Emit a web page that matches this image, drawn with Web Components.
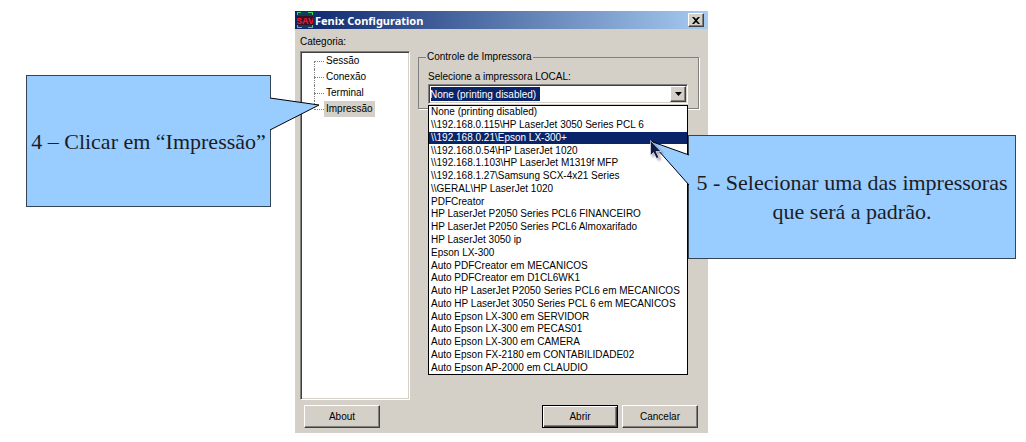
<!DOCTYPE html>
<html lang="pt-BR">
<head>
<meta charset="utf-8">
<title>Fenix Configuration</title>
<style>
body { margin: 0; background: #fff; }
</style>
</head>
<body>
<guide-slide></guide-slide>
<script>
const define = (name, html, setup) => customElements.define(name, class extends HTMLElement {
  constructor() {
    super();
    this.attachShadow({ mode: 'open' }).innerHTML = html;
    if (setup) setup(this, this.shadowRoot);
  }
});

define('title-bar', `
<style>
:host { display: flex; align-items: center; gap: 2px; height: 18px; padding: 0 4px 0 2px;
  background: linear-gradient(90deg, #0a246a, #a6caf0); color: #fff; font: bold 11px "Noto Sans", sans-serif; }
h1 { flex: 1; margin: 0; font: inherit; white-space: nowrap; }
svg { display: block; }
button { display: grid; place-items: center; width: 16px; height: 14px; padding: 0; background: #d4d0c8;
  border: 1px solid; border-color: #fff #404040 #404040 #fff; box-shadow: inset -1px -1px #808080; }
</style>
<svg width="16" height="16" viewBox="0 0 16 16" aria-hidden="true">
  <path fill="#123c5c" d="M0 0h16v16H0z"/>
  <path fill="#38102c" d="M0 4h16v9H0z"/>
  <path stroke="#38d860" d="M0 .5h4M11 .5h5M0 15.5h5M11 15.5h5M.5 0v3M15.5 0v3M.5 13v3M15.5 13v3"/>
  <text x="8" y="12" text-anchor="middle" font-family="Liberation Sans, sans-serif" font-size="9" font-weight="bold" fill="#ff1820">SAV</text>
</svg>
<h1><slot></slot></h1>
<button aria-label="Fechar"><svg width="8" height="7" viewBox="0 0 8 7"><path d="M0 0h2l2 2 2-2h2L5 3.500 8 7H6L4 5 2 7H0l3-3.500z"/></svg></button>
`);

define('push-button', `
<style>
:host { display: block; }
button { display: block; width: 100%; height: 23px; padding: 0; background: #d4d0c8; color: #000; font: inherit;
  border: 1px solid; border-color: #fff #404040 #404040 #fff; box-shadow: inset -1px -1px #808080; }
:host([default]) button { border-color: #000; box-shadow: inset 1px 1px #fff, inset -1px -1px #404040, inset -2px -2px #808080; }
</style>
<button><slot></slot></button>
`);

define('tree-item', `
<style>
:host { display: flex; align-items: center; height: 16px; padding-left: 12px; line-height: 16px; }
i { position: relative; align-self: stretch; width: 10px; }
i::before { content: ""; position: absolute; left: 0; top: 0; bottom: 0; border-left: 1px dotted #808080; }
i::after { content: ""; position: absolute; left: 0; right: 0; top: 8px; border-top: 1px dotted #808080; }
:host(:first-child) i::before { top: 8px; }
:host(:last-child) i::before { bottom: 7px; }
span { padding: 0 2px; }
:host([aria-selected="true"]) span { background: #d4d0c8; }
</style>
<i></i><span><slot></slot></span>
`);

define('category-tree', `
<style>
:host { display: block; box-sizing: border-box; background: #fff; border: 1px solid;
  border-color: #808080 #fff #fff #808080; box-shadow: inset 1px 1px #404040, inset -1px -1px #d4d0c8; padding: 1px; }
</style>
<slot></slot>
`);

define('printer-picker', `
<style>
:host { display: block; position: relative; }
.field { position: relative; }
select { display: block; box-sizing: border-box; width: 100%; height: 20px; padding: 0 20px 0 1px; appearance: none;
  border: 1px solid; border-color: #808080 #fff #fff #808080; border-radius: 0; outline: none;
  box-shadow: inset 1px 1px #404040, inset -1px -1px #d4d0c8; color: #fff; font: inherit;
  background: linear-gradient(#0a246a, #0a246a) 2px 2px / 109px 14px no-repeat #fff; }
.arrow { position: absolute; right: 2px; top: 2px; display: grid; place-items: center; box-sizing: border-box;
  width: 16px; height: 16px; background: #d4d0c8; border: 1px solid; border-color: #fff #404040 #404040 #fff;
  box-shadow: inset -1px -1px #808080; pointer-events: none; }
ul { position: absolute; z-index: 1; left: 0; right: 0; top: 21px; display: grid; grid-template-columns: minmax(0, 1fr);
  grid-auto-rows: 1fr; height: 270px; box-sizing: border-box; margin: 0; padding: 0; list-style: none;
  background: #fff; border: 1px solid #000; }
li { display: flex; align-items: center; padding-left: 2px; line-height: 12px; white-space: nowrap; }
li[aria-selected="true"] { background: #0a246a; color: #fff; }
.pointer { position: absolute; z-index: 2; right: 26px; top: 56px; filter: drop-shadow(2px 2px 1px #0005); }
</style>
<div class="field">
  <select id="printer" aria-label="Selecione a impressora LOCAL:"></select>
  <span class="arrow"><svg width="7" height="4" viewBox="0 0 7 4"><path d="M0 0h7L3.500 4z"/></svg></span>
</div>
<ul role="listbox" aria-label="Impressoras"></ul>
<svg class="pointer" width="12" height="20" viewBox="0 0 12 20" aria-hidden="true"><path d="M.5.5v15l3-3 3 6 2.500-1-3-6h5z" fill="#101c48" stroke="#fff" stroke-width=".6"/></svg>
`, (host, root) => {
  const printers = [
    'None (printing disabled)',
    '\\\\192.168.0.115\\HP LaserJet 3050 Series PCL 6',
    '\\\\192.168.0.21\\Epson LX-300+',
    '\\\\192.168.0.54\\HP LaserJet 1020',
    '\\\\192.168.1.103\\HP LaserJet M1319f MFP',
    '\\\\192.168.1.27\\Samsung SCX-4x21 Series',
    '\\\\GERAL\\HP LaserJet 1020',
    'PDFCreator',
    'HP LaserJet P2050 Series PCL6 FINANCEIRO',
    'HP LaserJet P2050 Series PCL6 Almoxarifado',
    'HP LaserJet 3050 ip',
    'Epson LX-300',
    'Auto PDFCreator em MECANICOS',
    'Auto PDFCreator em D1CL6WK1',
    'Auto HP LaserJet P2050 Series PCL6 em MECANICOS',
    'Auto HP LaserJet 3050 Series PCL 6 em MECANICOS',
    'Auto Epson LX-300 em SERVIDOR',
    'Auto Epson LX-300 em PECAS01',
    'Auto Epson LX-300 em CAMERA',
    'Auto Epson FX-2180 em CONTABILIDADE02',
    'Auto Epson AP-2000 em CLAUDIO'
  ];
  root.querySelector('select').append(new Option(printers[0]));
  printers.forEach((name, index) => {
    const item = document.createElement('li');
    item.setAttribute('role', 'option');
    item.setAttribute('aria-selected', index === 2);
    item.textContent = name;
    root.querySelector('ul').append(item);
  });
});

define('config-window', `
<style>
:host { display: flex; flex-direction: column; background: #d4d0c8; color: #000; font: 10px "Liberation Sans", Arial, sans-serif; }
.body { display: grid; grid-template-columns: 110px 1fr; column-gap: 8px; padding: 6px 9px 5px 5px; }
.side { display: flex; flex-direction: column; }
.side p { margin: 0; height: 16px; line-height: 14px; }
category-tree { height: 349px; }
fieldset { min-width: 0; margin: 16px 0 0; padding: 8px 10px 0 9px; border: 1px solid #808080; height: 58px; box-sizing: border-box;
  box-shadow: 1px 1px #fff; }
legend { padding: 0 1px; margin-left: -2px; line-height: 12px; }
label { display: block; line-height: 12px; margin-bottom: 1px; }
footer { display: flex; padding: 0 10px 5px 9px; gap: 4px; }
push-button { width: 76px; }
push-button[default] { margin-left: auto; }
</style>
<title-bar>Fenix Configuration</title-bar>
<div class="body">
  <div class="side">
    <p>Categoria:</p>
    <category-tree role="tree" aria-label="Categoria">
      <tree-item role="treeitem">Sessão</tree-item>
      <tree-item role="treeitem">Conexão</tree-item>
      <tree-item role="treeitem">Terminal</tree-item>
      <tree-item role="treeitem" aria-selected="true">Impressão</tree-item>
    </category-tree>
  </div>
  <fieldset>
    <legend>Controle de Impressora</legend>
    <label>Selecione a impressora LOCAL:</label>
    <printer-picker></printer-picker>
  </fieldset>
</div>
<footer>
  <push-button>About</push-button>
  <push-button default>Abrir</push-button>
  <push-button>Cancelar</push-button>
</footer>
`, (host, root) => {
  root.querySelector('label').addEventListener('click', () =>
    root.querySelector('printer-picker').shadowRoot.querySelector('select').focus());
});

define('call-out', `
<style>
:host { display: grid; place-items: center; box-sizing: border-box; position: relative; background: #9cf;
  border: 1px solid #345; color: #1c1c24; font: 22px/29px "Liberation Serif", "Times New Roman", serif; text-align: center; white-space: nowrap; }
svg { position: absolute; overflow: visible; display: none; fill: #9cf; stroke: #000; }
:host([tail="right"]) .right { display: block; left: 100%; top: 21px; }
:host([tail="left"]) .left { display: block; right: 100%; top: 5px; }
</style>
<svg class="right" width="50" height="34" aria-hidden="true"><path d="M0 1L49 8 0 33"/><path stroke="#9cf" d="M.5 2v30"/></svg>
<svg class="left" width="39" height="50" aria-hidden="true"><path d="M39 14L0 0 39 44"/><path stroke="#9cf" d="M39.500 15v28"/></svg>
<div><slot></slot></div>
`);

define('guide-slide', `
<style>
:host { display: grid; grid-template-columns: minmax(0, 295fr) minmax(0, 413fr) minmax(0, 318fr); align-items: start; padding: 11px 0 9px; }
call-out { z-index: 1; }
.first { height: 132px; margin: 64px 24px 0 26px; }
.second { height: 124px; margin: 124px 10px 0 -20px; }
</style>
<call-out class="first" tail="right">4 – Clicar em “Impressão”</call-out>
<config-window></config-window>
<call-out class="second" tail="left">5 - Selecionar uma das impressoras<br>que será a padrão.</call-out>
`);
</script>
</body>
</html>
